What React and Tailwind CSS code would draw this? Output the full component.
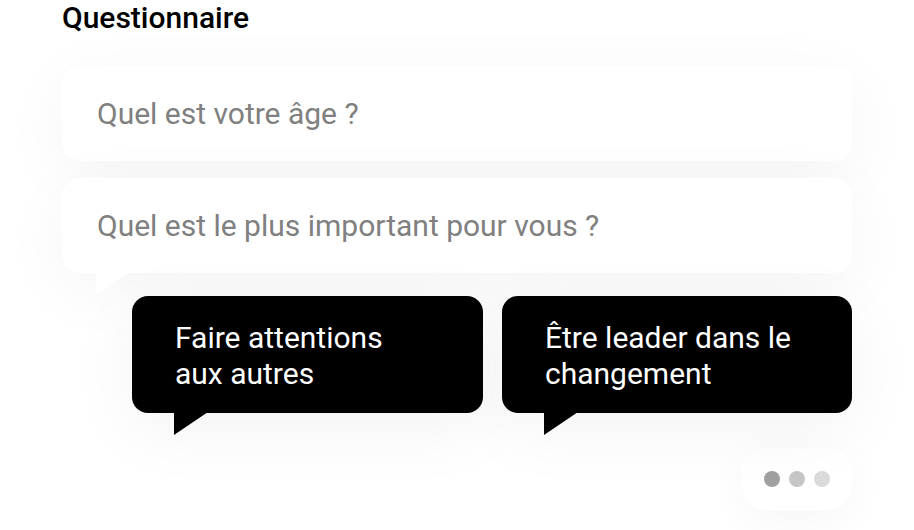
export default function App() {
  const font = { fontFamily: "Roboto, 'Noto Sans', sans-serif" };
  return (
    <div className="w-[914px] h-[530px] bg-white overflow-hidden" style={font}>
      <div className="flex flex-col">
        <div className="pl-[62px] h-9 leading-9 text-[30px] font-medium text-black">Questionnaire</div>

        <div className="mt-[30px] ml-[62px] w-[790px] h-[95px] rounded-[18px] bg-white shadow-[0_16px_70px_rgba(0,0,0,0.045)] flex items-center pl-[35px]">
          <span className="text-[30px] text-[#808080]">Quel est votre âge ?</span>
        </div>

        <div className="relative mt-[17px] ml-[62px] w-[790px] h-[95px] rounded-[18px] bg-white shadow-[0_16px_70px_rgba(0,0,0,0.045)] flex items-center pl-[35px]">
          <span className="text-[30px] text-[#808080]">Quel est le plus important pour vous ?</span>
          <svg className="absolute left-[34px] top-[94px]" width="34" height="23" viewBox="0 0 34 23">
            <polygon points="0,0 34,0 0,23" fill="#ffffff" />
          </svg>
        </div>

        <div className="mt-[23px] ml-[132px] flex gap-[19px]">
          <div className="relative w-[351px] h-[117px] rounded-[16px] bg-black pl-[43px] pt-[24px] shadow-[0_16px_70px_rgba(0,0,0,0.05)]">
            <div className="text-[30px] leading-[36px] text-white">Faire attentions<br />aux autres</div>
            <svg className="absolute left-[42px] top-[116px]" width="34" height="23" viewBox="0 0 34 23">
              <polygon points="0,0 34,0 0,23" fill="#000000" />
            </svg>
          </div>
          <div className="relative w-[350px] h-[117px] rounded-[16px] bg-black pl-[43px] pt-[24px] shadow-[0_16px_70px_rgba(0,0,0,0.05)]">
            <div className="text-[30px] leading-[36px] text-white">Être leader dans le<br />changement</div>
            <svg className="absolute left-[42px] top-[116px]" width="34" height="23" viewBox="0 0 34 23">
              <polygon points="0,0 34,0 0,23" fill="#000000" />
            </svg>
          </div>
        </div>

        <div className="mt-[35px] ml-[742px] w-[110px] h-[62px] rounded-[24px] bg-white shadow-[0_10px_40px_rgba(0,0,0,0.04)] flex items-center pl-[22px] gap-[9px]">
          <span className="w-4 h-4 rounded-full bg-[#a0a0a0]" />
          <span className="w-4 h-4 rounded-full bg-[#c6c6c6]" />
          <span className="w-4 h-4 rounded-full bg-[#dadada]" />
        </div>
      </div>
    </div>
  );
}
